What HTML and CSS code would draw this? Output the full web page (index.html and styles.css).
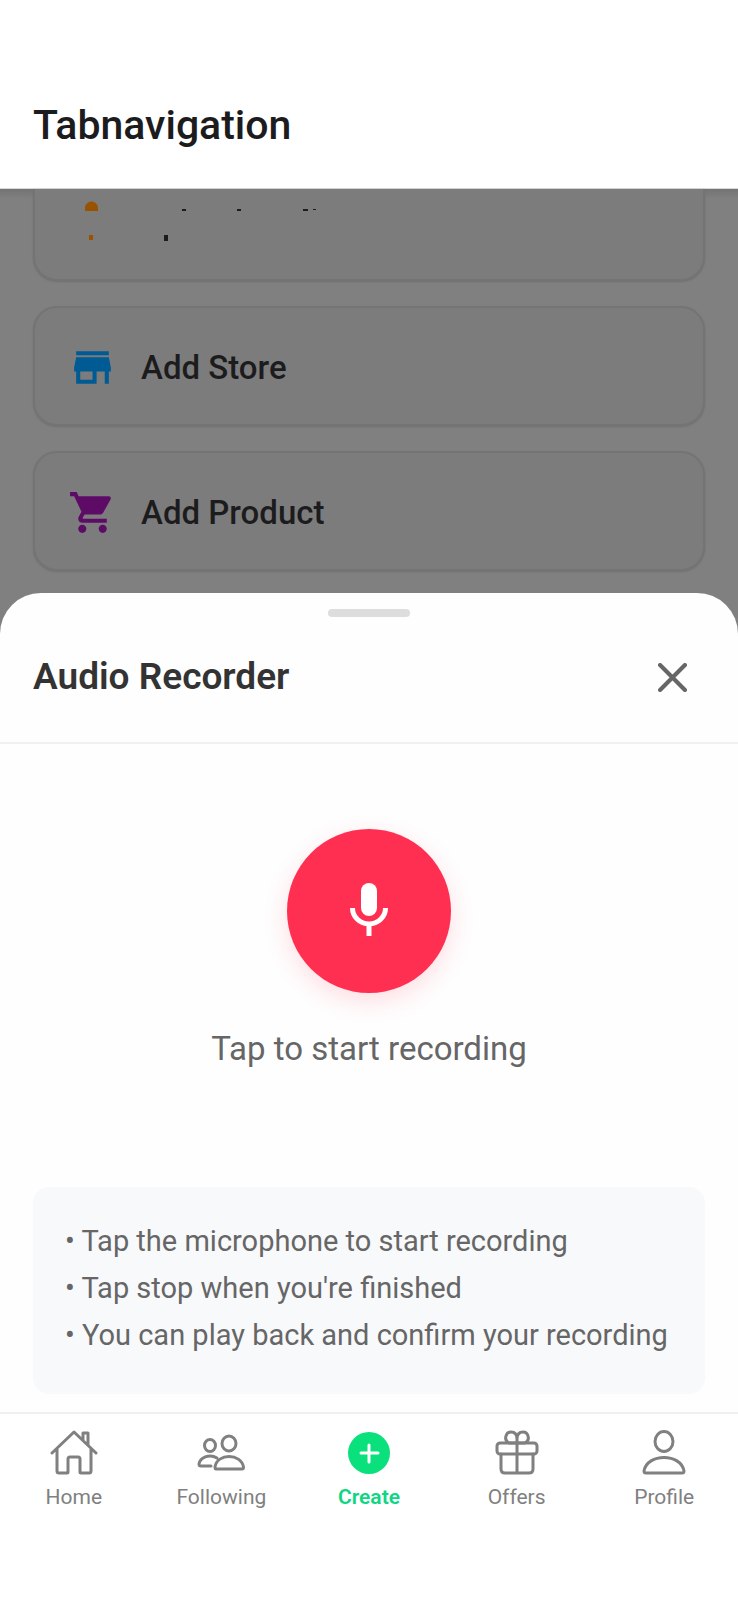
FILE: index.html
```html
<!DOCTYPE html>
<html lang="en">
<head>
<meta charset="utf-8">
<meta name="viewport" content="width=device-width, initial-scale=1">
<title>Tabnavigation</title>
<link rel="stylesheet" href="styles.css">
</head>
<body>
<div class="screen">
  <header class="app-bar"><h1 class="app-title">Tabnavigation</h1></header>
  <main class="content">
    <div class="options">
      <div class="card card-partial">
        <svg class="remnant" viewBox="0 0 300 52" aria-hidden="true">
          <path fill="#995200" d="M14 22v-3a6.500 6.500 0 0 1 13 0v3zM18 46h4v5h-4z"/>
          <path fill="#1c1c1c" d="M111 20h4v2h-4zM166 20h4v2h-4zM232 20h5v2h-5zM242 20h3v1h-3zM93 46h4v6h-4z"/>
        </svg>
      </div>
      <button class="card" type="button">
        <svg class="card-icon" viewBox="0 0 24 24" fill="#005a94" aria-hidden="true"><path d="M20 4H4v2h16V4zm1 10v-2l-1-5H4l-1 5v2h1v6h10v-6h4v6h2v-6h1zm-9 4H6v-4h6v4z"/></svg>
        <span>Add Store</span>
      </button>
      <button class="card" type="button">
        <svg class="card-icon" viewBox="0 0 24 24" fill="#5e0b68" aria-hidden="true"><path d="M7 18c-1.100 0-1.990.9-1.990 2S5.900 22 7 22s2-.9 2-2-.9-2-2-2zM1 2v2h2l3.600 7.590-1.350 2.450c-.16.280-.25.610-.25.960 0 1.100.9 2 2 2h12v-2H7.420c-.14 0-.25-.11-.25-.25l.03-.12.900-1.630h7.450c.75 0 1.410-.41 1.750-1.030l3.580-6.490c.08-.14.120-.31.120-.48 0-.55-.45-1-1-1H5.210l-.94-2H1zm16 16c-1.100 0-1.990.9-1.990 2s.89 2 1.990 2 2-.9 2-2-.9-2-2-2z"/></svg>
        <span>Add Product</span>
      </button>
    </div>
    <section class="sheet" role="dialog" aria-labelledby="sheet-title">
      <div class="handle"></div>
      <div class="sheet-head">
        <h2 class="sheet-title" id="sheet-title">Audio Recorder</h2>
        <button class="close" type="button" aria-label="Close">
          <svg viewBox="0 0 28 28" fill="none" stroke="#666" stroke-width="4" stroke-linecap="round" aria-hidden="true"><path d="M2 2l24 24M26 2L2 26"/></svg>
        </button>
      </div>
      <div class="recorder">
        <button class="record" type="button" aria-labelledby="record-label">
          <svg viewBox="0 0 38 56" aria-hidden="true"><rect x="11" width="16" height="33" rx="8" fill="#fff"/><path d="M2.500 25a16.500 16 0 0 0 33 0M19 41v12" fill="none" stroke="#fff" stroke-width="5"/></svg>
        </button>
        <p class="record-label" id="record-label">Tap to start recording</p>
      </div>
      <div class="hints">
        <p>• Tap the microphone to start recording</p>
        <p>• Tap stop when you're finished</p>
        <p>• You can play back and confirm your recording</p>
      </div>
    </section>
  </main>
  <nav class="tabs">
    <a class="tab" href="#home">
      <svg class="tab-icon" viewBox="0 0 48 48" aria-hidden="true"><path d="M2 24L24 3l22 21M7 20v22q0 2 2 2h8q1 0 1-1V30q0-2 2-2h8q2 0 2 2v13q0 1 1 1h8q2 0 2-2V20M33 11V4h5v12"/></svg>
      <span>Home</span>
    </a>
    <a class="tab" href="#following">
      <svg class="tab-icon" viewBox="0 0 48 48" aria-hidden="true"><ellipse cx="13" cy="16.500" rx="5.500" ry="6"/><ellipse cx="32" cy="14.500" rx="7" ry="7.500"/><path d="M20 29C12 24 3 29 2 35q0 2 2 2h10M18 38C20 24 44 24 46.500 38q0 2-1.500 2H19q-1 0-1-2z"/></svg>
      <span>Following</span>
    </a>
    <a class="tab tab-active" href="#create" aria-current="page">
      <svg class="tab-icon" viewBox="0 0 48 48" aria-hidden="true"><circle cx="24" cy="24" r="21" fill="#0ae07c" stroke="none"/><path d="M24 16v17M16 24h17" stroke="#fff"/></svg>
      <span>Create</span>
    </a>
    <a class="tab" href="#offers">
      <svg class="tab-icon" viewBox="0 0 48 48" aria-hidden="true"><rect x="4" y="14" width="40" height="11" rx="3"/><path d="M8 25v15q0 4 4 4h24q4 0 4-4V25M24 14v30M24 14h-8C10 11 13 3 18 3q6 0 6 7v4h8c6-3 3-11-2-11q-6 0-6 7"/></svg>
      <span>Offers</span>
    </a>
    <a class="tab" href="#profile">
      <svg class="tab-icon" viewBox="0 0 48 48" aria-hidden="true"><ellipse cx="24" cy="12.500" rx="9" ry="10"/><path d="M6 44q-2 0-2-2C7 24 41 24 44 42q0 2-2 2z"/></svg>
      <span>Profile</span>
    </a>
  </nav>
</div>
</body>
</html>
```
FILE: styles.css
```css
* { box-sizing: border-box; }
body { margin: 0; background: #fff; font-family: Roboto, sans-serif; }
h1, h2, p { margin: 0; }
button { border: 0; padding: 0; font: inherit; background: none; cursor: pointer; }
svg { display: block; }
.screen { display: flex; flex-direction: column; min-height: 100vh; }
.app-bar { padding: 101px 33px 39px; border-bottom: 1px solid #d8d8d8; background: #fff; }
.app-title { font-size: 41px; line-height: 48px; font-weight: 500; color: #1c1c1e; }
.content { flex: 1; display: flex; flex-direction: column; background: #808080; }
.options {
  display: flex; flex-direction: column; gap: 25px; padding: 0 33px 22px;
  background: linear-gradient(#747474, #808080 10px);
}
.card {
  display: flex; align-items: center; gap: 24px; height: 120px; padding: 2px 33px 0;
  border: 2px solid #747474; border-radius: 24px; background: #7c7c7c;
  box-shadow: 0 1px 2px #707070;
  font-size: 33px; font-weight: 500; color: #1c1c1e; text-align: left;
}
.card-partial { height: 92px; padding: 0; align-items: flex-start; border-top: 0; border-radius: 0 0 24px 24px; }
.card-partial .remnant { width: 300px; height: 52px; margin-left: 36px; }
.card-icon { width: 49px; height: 49px; }
.sheet {
  flex: 1; display: flex; flex-direction: column; padding-bottom: 18px;
  border-radius: 41px 41px 0 0; background: #fefefe;
}
.handle { align-self: center; width: 82px; height: 8px; margin-top: 16px; border-radius: 4px; background: #ddd; }
.sheet-head {
  display: flex; align-items: center; justify-content: space-between;
  padding: 34px 51px 39px 33px; border-bottom: 2px solid #f0f0f0;
}
.sheet-title { font-size: 37px; line-height: 52px; font-weight: 600; color: #333; }
.close svg { width: 29px; height: 29px; }
.recorder { flex: 1; display: flex; flex-direction: column; align-items: center; gap: 36px; padding-top: 85px; }
.record {
  display: grid; place-items: center; width: 164px; height: 164px; border-radius: 50%;
  background: #ff2f51; box-shadow: 0 8px 24px rgba(255, 47, 81, .16);
}
.record svg { width: 38px; height: 56px; }
.record-label { font-size: 33px; line-height: 40px; color: #666; }
.hints { margin: 0 33px; padding: 31px 32px 35px; border-radius: 16px; background: #f8f9fb; }
.hints p { font-size: 29px; line-height: 47px; color: #666; }
.tabs {
  display: grid; grid-template-columns: repeat(5, 1fr); height: 188px; padding-top: 15px;
  border-top: 2px solid #efefef; background: #fff;
}
.tab {
  display: flex; flex-direction: column; align-items: center; gap: 7px;
  font-size: 21px; line-height: 26px; font-weight: 400; color: #808080; text-decoration: none;
}
.tab-icon {
  width: 48px; height: 48px; fill: none; stroke: #808080; stroke-width: 3;
  stroke-linecap: round; stroke-linejoin: round;
}
.tab-active { font-weight: 600; color: #0fd684; }
```
